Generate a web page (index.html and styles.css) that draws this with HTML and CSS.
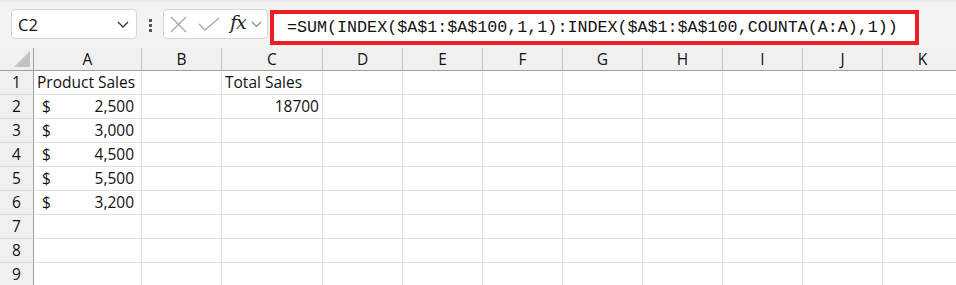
FILE: index.html
```html
<!DOCTYPE html>
<html lang="en">
<head>
    <meta charset="UTF-8">
    <title>Sheet</title>
    <link rel="stylesheet" href="styles.css">
</head>
<body>
<div class="bar">
    <div class="namebox">
        <span>C2</span>
        <svg class="chev" width="12" height="7" viewBox="0 0 12 7"><path d="M1 1 L6 6 L11 1" fill="none" stroke="#333" stroke-width="1.3"/></svg>
    </div>
    <div class="dots"><i></i><i></i><i></i></div>
    <div class="fbtns">
        <svg width="17" height="17" viewBox="0 0 17 17"><path d="M1 1 L16 16 M16 1 L1 16" stroke="#a6a6a6" stroke-width="1.3"/></svg>
        <svg class="ok" width="22" height="14" viewBox="0 0 22 14"><path d="M1 7 L7 13 L21 1" fill="none" stroke="#a6a6a6" stroke-width="1.3"/></svg>
        <span class="fx">fx</span>
        <svg class="chev2" width="11" height="7" viewBox="0 0 11 7"><path d="M1 1 L5.5 5.5 L10 1" fill="none" stroke="#888" stroke-width="1.2"/></svg>
    </div>
    <div class="formula">=SUM(INDEX($A$1:$A$100,1,1):INDEX($A$1:$A$100,COUNTA(A:A),1))</div>
</div>

<div class="sheet">
    <div class="hd corner"><span class="tri"></span></div>
    <div class="hd">A</div><div class="hd">B</div><div class="hd">C</div><div class="hd">D</div>
    <div class="hd">E</div><div class="hd">F</div><div class="hd">G</div><div class="hd">H</div>
    <div class="hd">I</div><div class="hd">J</div><div class="hd">K</div>
</div>
<div class="sheet" id="rows"></div>

<script>
    var rows=document.getElementById("rows");
    var data=[
        ["Product Sales","","Total Sales"],
        ["2,500","","18700"],
        ["3,000"],
        ["4,500"],
        ["5,500"],
        ["3,200"],
        [],[],[]
    ];
    for(var i=0;i<data.length;i++){
        var rh=document.createElement("div");
        rh.className="rh";
        rh.textContent=i+1;
        rows.appendChild(rh);
        for(var j=0;j<11;j++){
            var c=document.createElement("div");
            c.className="cell";
            var v=data[i][j]||"";
            if(i>0&&j==0&&v){
                c.className="cell money";
                c.innerHTML="<span>$</span><span>"+v+"</span>";
            }else if(i>0&&j==2){
                c.className="cell num";
                c.textContent=v;
            }else{
                c.textContent=v;
            }
            rows.appendChild(c);
        }
    }
</script>
</body>
</html>
```

FILE: styles.css
```css
*{
    margin: 0;
    padding: 0;
    box-sizing: border-box;
}
body
{
    width: 956px;
    height: 285px;
    overflow: hidden;
    background: #fff;
    font-family: "Open Sans", "Noto Sans", sans-serif;
    color: #111;
}
.bar
{
    height: 48px;
    background: #f3f3f3;
    border-top: 2px solid #e9e9e9;
    display: flex;
    align-items: flex-start;
    padding-left: 11px;
    padding-top: 7px;
}
.namebox
{
    width: 126px;
    height: 30px;
    background: #fff;
    border: 1px solid #d6d6d6;
    border-radius: 4px;
    display: flex;
    align-items: center;
    justify-content: space-between;
    padding: 0 7px 0 6px;
    font-size: 16.5px;
}
.dots
{
    width: 26px;
    display: flex;
    flex-direction: column;
    align-items: center;
    gap: 2px;
    padding-top: 10px;
}
.dots i
{
    width: 3px;
    height: 3px;
    background: #555;
}
.fbtns
{
    width: 105px;
    height: 30px;
    background: #fff;
    border: 1px solid #d6d6d6;
    border-radius: 4px;
    display: flex;
    align-items: center;
    padding-left: 6px;
}
.ok
{
    margin-left: 11px;
}
.fx
{
    font-family: "DejaVu Serif", serif;
    font-style: italic;
    font-size: 19px;
    color: #222;
    margin-left: 10px;
    line-height: 1;
    margin-top: -3px;
    letter-spacing: -1px;
}
.chev2
{
    margin-left: 5px;
}
.formula
{
    margin-left: 2px;
    margin-top: 1px;
    width: 649px;
    height: 35px;
    background: #fff;
    border: 4px solid #ee1c25;
    font-family: "Liberation Mono", monospace;
    font-size: 16.7px;
    line-height: 27px;
    padding-left: 13px;
    color: #111;
    white-space: nowrap;
}
.sheet
{
    display: grid;
    grid-template-columns: 34px 108px 80px 101px repeat(8, 80px);
    width: 1003px;
}
.hd
{
    height: 23px;
    background: #f0f0f0;
    border-right: 1px solid #c6c6c6;
    border-bottom: 1px solid #9e9e9e;
    text-align: center;
    font-size: 15.5px;
    line-height: 22px;
}
.corner
{
    position: relative;
    border-right-color: #9e9e9e;
}
.tri
{
    position: absolute;
    right: 3px;
    bottom: 3px;
    width: 0;
    height: 0;
    border-left: 16px solid transparent;
    border-bottom: 16px solid #c2c2c2;
}
.rh
{
    height: 24px;
    background: #f0f0f0;
    border-right: 1px solid #9e9e9e;
    border-bottom: 1px solid #d9d9d9;
    text-align: center;
    font-size: 15.5px;
    line-height: 23px;
}
.cell
{
    height: 24px;
    border-right: 1px solid #dedede;
    border-bottom: 1px solid #dedede;
    font-size: 15.5px;
    line-height: 23px;
    padding: 0 3px;
    white-space: nowrap;
}
.money
{
    display: flex;
    justify-content: space-between;
    padding: 0 7px 0 8px;
}
.num
{
    text-align: right;
}
```
